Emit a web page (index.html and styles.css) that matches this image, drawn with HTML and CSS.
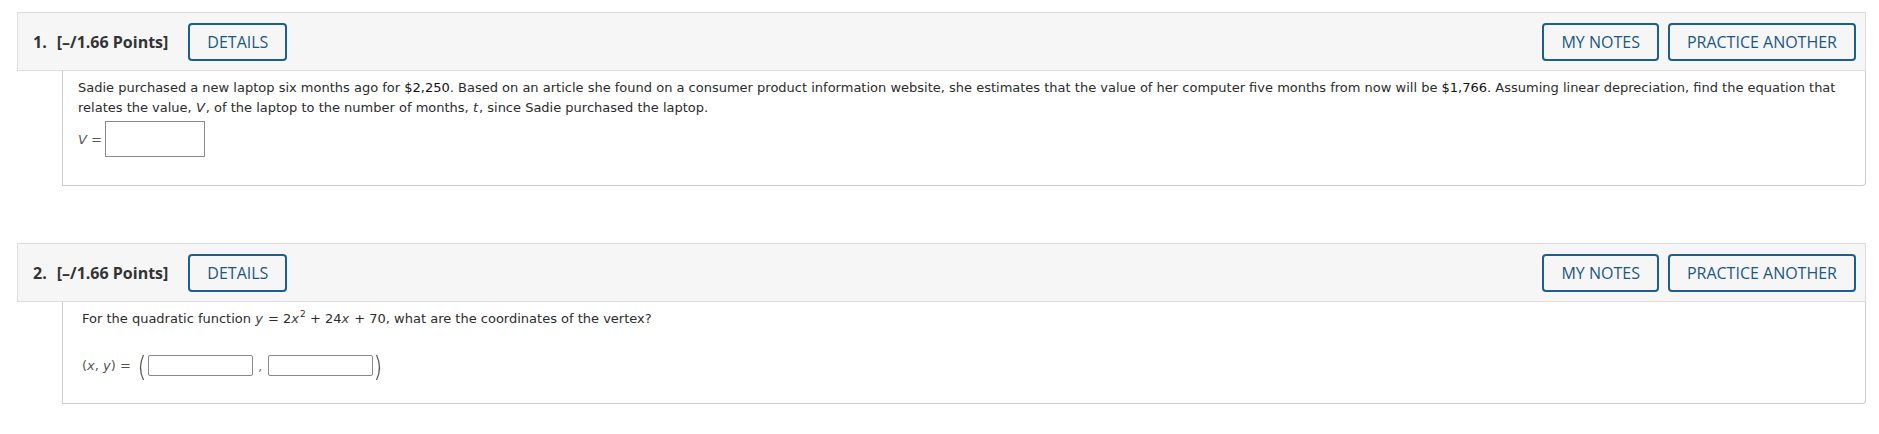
FILE: index.html
```html
<!DOCTYPE html>
<html>
<head>
<meta charset="utf-8">
<link rel="stylesheet" href="styles.css">
</head>
<body>
<div class="page">
  <section class="question q1">
    <div class="qhead">
      <div class="qtitle"><span class="qnum">1.</span><span class="qpts">[–/1.66 Points]</span></div>
      <button class="btn">DETAILS</button>
      <div class="spacer"></div>
      <button class="btn">MY NOTES</button>
      <button class="btn">PRACTICE ANOTHER</button>
    </div>
    <div class="qbody">
      <p class="qtext"><span class="ln">Sadie purchased a new laptop six months ago for <span class="money">$2,250</span>. Based on an article she found on a consumer product information website, she estimates that the value of her computer five months from now will be <span class="money">$1,766</span>. Assuming linear depreciation, find the equation that</span><span class="ln">relates the value, <i>V</i>, of the laptop to the number of months, <i>t</i>, since Sadie purchased the laptop.</span></p>
      <div class="answer-row">
        <span class="math"><i>V</i> =</span>
        <span class="inbox big"></span>
      </div>
    </div>
  </section>

  <section class="question q2">
    <div class="qhead">
      <div class="qtitle"><span class="qnum">2.</span><span class="qpts">[–/1.66 Points]</span></div>
      <button class="btn">DETAILS</button>
      <div class="spacer"></div>
      <button class="btn">MY NOTES</button>
      <button class="btn">PRACTICE ANOTHER</button>
    </div>
    <div class="qbody indent">
      <p class="qtext">For the quadratic function <i class="mv">y</i> = 2<i class="mv">x</i><sup>2</sup> + 24<i class="mv">x</i> + 70, what are the coordinates of the vertex?</p>
      <div class="answer-row pair">
        <span class="math">(<i>x</i>, <i>y</i>) =</span>
        <svg class="paren" width="9" height="27" viewBox="0 0 9 27"><path d="M7.5 1 Q1.5 13.5 7.5 26" fill="none" stroke="#555" stroke-width="1.2"/></svg>
        <span class="inbox small"></span>
        <span class="comma">,</span>
        <span class="inbox small"></span>
        <svg class="paren" width="9" height="27" viewBox="0 0 9 27"><path d="M1.5 1 Q7.5 13.5 1.5 26" fill="none" stroke="#555" stroke-width="1.2"/></svg>
      </div>
    </div>
  </section>
</div>
</body>
</html>
```

FILE: styles.css
```css
html, body {
  margin: 0;
  padding: 0;
  background: #ffffff;
}

.page {
  padding: 12px 13px 0 17px;
}

.question + .question {
  margin-top: 57px;
}

.qhead {
  display: flex;
  align-items: center;
  gap: 9px;
  height: 57px;
  background: #f6f6f6;
  border: 1px solid #dddddd;
  padding: 0 9px 0 15px;
}

.qtitle {
  font-family: "Open Sans", sans-serif;
  font-weight: 700;
  font-size: 16px;
  color: #333333;
  margin-right: 11px;
  white-space: nowrap;
}

.qnum {
  margin-right: 10px;
}

.spacer {
  flex: 1;
}

.btn {
  font-family: "Open Sans", sans-serif;
  font-size: 16px;
  font-weight: 500;
  color: #1b5783;
  background: transparent;
  border: 2px solid #1a5f8d;
  border-radius: 4px;
  height: 38px;
  padding: 0 17px;
  line-height: 34px;
  white-space: nowrap;
  cursor: pointer;
}

.qbody {
  margin-left: 45px;
  border: 1px solid #cccccc;
  border-top: none;
  border-radius: 0 0 4px 0;
  padding: 7px 15px 0 15px;
  font-family: "DejaVu Sans", Verdana, sans-serif;
  font-size: 13px;
  color: #2b2b2b;
}

.q1 .qbody {
  height: 107px;
}

.q2 .qbody {
  height: 94px;
}

.qbody.indent {
  padding-left: 19px;
}

.qtext {
  margin: 0;
  line-height: 19.5px;
}

.ln {
  display: block;
  white-space: nowrap;
}

.qtext i {
  padding-right: 1px;
}

.money {
  color: #111111;
}

.qtext sup {
  font-size: 9px;
  line-height: 0;
  vertical-align: 6px;
}

.mv {
  color: #444444;
}

.answer-row {
  display: flex;
  align-items: center;
  margin-top: 4px;
}

.math {
  color: #555555;
  margin-right: 4px;
}

.inbox {
  display: inline-block;
  border: 1px solid #8a8a8a;
  background: #ffffff;
  box-sizing: border-box;
}

.inbox.big {
  width: 100px;
  height: 36px;
  margin-left: -1px;
}

.answer-row.pair {
  margin-top: 23px;
}

.inbox.small {
  width: 105px;
  height: 21px;
  border-radius: 2px;
}

.paren {
  display: block;
  margin: 0 3px 0 1px;
  transform: translateY(2px);
}

.paren:last-child {
  margin: 0 0 0 2px;
}

.comma {
  color: #777777;
  margin: 0 5px 0 6px;
  font-style: italic;
  font-size: 13px;
  line-height: 14px;
  transform: translateY(2px);
}
```
